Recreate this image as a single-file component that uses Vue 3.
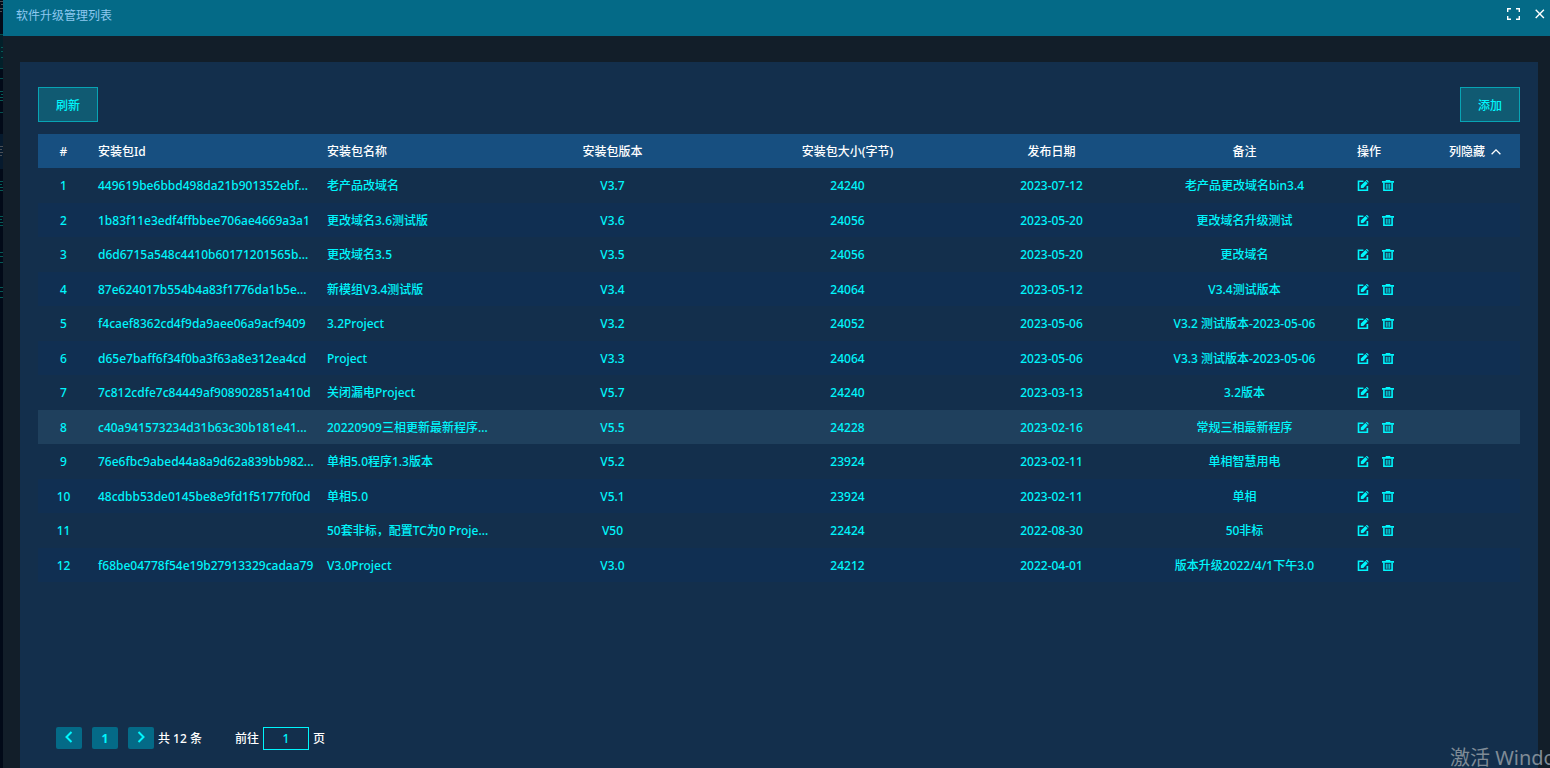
<script setup>
import { ref } from 'vue'

const page = ref('1')
const rows = [
  ['449619be6bbd498da21b901352ebf...', '老产品改域名', 'V3.7', '24240', '2023-07-12', '老产品更改域名bin3.4'],
  ['1b83f11e3edf4ffbbee706ae4669a3a1', '更改域名3.6测试版', 'V3.6', '24056', '2023-05-20', '更改域名升级测试'],
  ['d6d6715a548c4410b60171201565b...', '更改域名3.5', 'V3.5', '24056', '2023-05-20', '更改域名'],
  ['87e624017b554b4a83f1776da1b5e...', '新模组V3.4测试版', 'V3.4', '24064', '2023-05-12', 'V3.4测试版本'],
  ['f4caef8362cd4f9da9aee06a9acf9409', '3.2Project', 'V3.2', '24052', '2023-05-06', 'V3.2 测试版本-2023-05-06'],
  ['d65e7baff6f34f0ba3f63a8e312ea4cd', 'Project', 'V3.3', '24064', '2023-05-06', 'V3.3 测试版本-2023-05-06'],
  ['7c812cdfe7c84449af908902851a410d', '关闭漏电Project', 'V5.7', '24240', '2023-03-13', '3.2版本'],
  ['c40a941573234d31b63c30b181e41...', '20220909三相更新最新程序...', 'V5.5', '24228', '2023-02-16', '常规三相最新程序'],
  ['76e6fbc9abed44a8a9d62a839bb982...', '单相5.0程序1.3版本', 'V5.2', '23924', '2023-02-11', '单相智慧用电'],
  ['48cdbb53de0145be8e9fd1f5177f0f0d', '单相5.0', 'V5.1', '23924', '2023-02-11', '单相'],
  ['', '50套非标，配置TC为0 Proje...', 'V50', '22424', '2022-08-30', '50非标'],
  ['f68be04778f54e19b27913329cadaa79', 'V3.0Project', 'V3.0', '24212', '2022-04-01', '版本升级2022/4/1下午3.0'],
]
const activeRow = 7
</script>

<template>
  <div class="screen">
    <svg class="backdrop" width="3" height="320" viewBox="0 0 3 320" aria-hidden="true">
      <path class="shade" d="M0 34h3v35H0z" />
      <path class="band" d="M0 134h3v35H0z" />
      <path class="gray" d="M0 1.5h3M1 4.5h2M0 8.5h3M0 11.5h2M0 146.5h3M0 149.5h2M0 152.5h3M0 155.5h2" />
      <path class="rule" d="M0 34.5h3M0 68.5h3M0 78.5h3M0 112.5h3" />
      <path class="green" d="M1 47.5h2M1 51.5h2M1 57.5h2M0 91.5h3M1 94.5h2M0 97.5h3M0 100.5h3M0 181.5h3M0 184.5h2M0 187.5h3M0 190.5h3M0 216.5h3M0 219.5h2M0 222.5h3M0 225.5h3M0 252.5h3M0 256.5h3M0 262.5h3M0 287.5h3M0 291.5h3M0 297.5h3" />
    </svg>
    <section class="dialog">
      <header class="titlebar">
        <h1>软件升级管理列表</h1>
        <div class="window-tools">
          <button type="button" aria-label="全屏">
            <svg width="13" height="12" viewBox="0 0 13 12"><path d="M.7 4V.7h3.3M9 .7h3.3V4M12.3 8v3.3H9M4 11.3H.7V8" /></svg>
          </button>
          <button type="button" aria-label="关闭">
            <svg width="10" height="10" viewBox="0 0 10 10"><path d="M.7.7l8.2 8.2M8.9.7L.7 8.9" /></svg>
          </button>
        </div>
      </header>

      <main class="panel">
        <div class="toolbar">
          <button type="button" class="action">刷新</button>
          <button type="button" class="action">添加</button>
        </div>

        <table>
          <colgroup>
            <col class="c-no"><col class="c-id"><col class="c-name"><col class="c-version"><col class="c-size">
            <col class="c-date"><col class="c-remark"><col class="c-ops"><col class="c-hide">
          </colgroup>
          <thead>
            <tr>
              <th>#</th>
              <th class="left">安装包Id</th>
              <th class="left">安装包名称</th>
              <th>安装包版本</th>
              <th>安装包大小(字节)</th>
              <th>发布日期</th>
              <th>备注</th>
              <th class="ops">操作</th>
              <th>
                <button type="button" class="hide-toggle">
                  列隐藏
                  <svg width="10" height="6" viewBox="0 0 10 6"><path d="M.6 5.3L5 .9l4.4 4.4" /></svg>
                </button>
              </th>
            </tr>
          </thead>
          <tbody>
            <tr v-for="(row, i) in rows" :key="i" :class="{ active: i === activeRow }">
              <td>{{ i + 1 }}</td>
              <td class="left">{{ row[0] }}</td>
              <td class="left">{{ row[1] }}</td>
              <td>{{ row[2] }}</td>
              <td>{{ row[3] }}</td>
              <td>{{ row[4] }}</td>
              <td>{{ row[5] }}</td>
              <td class="ops">
                <div class="icons">
                  <button type="button" aria-label="编辑">
                    <svg width="12" height="12" viewBox="0 0 12 12">
                      <path class="line" d="M6.4 1.3H1.5v8.9h8.9V6" />
                      <path class="fill" d="M3.8 8V5.6L8.4 1l2.3 2.3L6.2 8zM9 .5l.4-.4c.2-.1.5-.1.7 0l1.4 1.4c.2.3.2.5 0 .7l-.4.5z" />
                    </svg>
                  </button>
                  <button type="button" aria-label="删除">
                    <svg width="12" height="12" viewBox="0 0 12 12">
                      <path class="fill" d="M3.7 0h4.6v1H12v1.8H0V1h3.7z" />
                      <path class="line" d="M1.9 2.5v7.8h8.2V2.5" />
                      <path class="thin" d="M4.3 3.8v5M6 3.8v5M7.7 3.8v5" />
                    </svg>
                  </button>
                </div>
              </td>
              <td></td>
            </tr>
          </tbody>
        </table>

        <nav class="pager" aria-label="分页">
          <button type="button" class="page" aria-label="上一页">
            <svg width="8" height="12" viewBox="0 0 8 12"><path d="M6.5 1L1.5 6l5 5" /></svg>
          </button>
          <button type="button" class="page number">1</button>
          <button type="button" class="page" aria-label="下一页">
            <svg width="8" height="12" viewBox="0 0 8 12"><path d="M1.5 1l5 5-5 5" /></svg>
          </button>
          <span class="total">共 12 条</span>
          <label class="jump">前往 <input v-model="page" type="text"> 页</label>
        </nav>
      </main>
    </section>
    <div class="watermark">激活 Windows</div>
  </div>
</template>

<style>
body {
  margin: 0;
  background: #020a18;
}
</style>

<style scoped>
.screen {
  position: relative;
  box-sizing: border-box;
  height: 100vh;
  padding-left: 3px;
  overflow: hidden;
  font: 500 12px/18px "Noto Sans", "Noto Sans CJK SC", sans-serif;
  color: #fff;
}
.backdrop {
  position: absolute;
  top: 0;
  left: 0;
}
.backdrop .shade {
  fill: #03202a;
  stroke: none;
}
.backdrop .band {
  fill: #061a2e;
  stroke: none;
}
.backdrop .gray {
  stroke: #4a4f55;
}
.backdrop .rule {
  stroke: #04504f;
}
.backdrop .green {
  stroke: #045a56;
}
button,
input {
  margin: 0;
  padding: 0;
  border: 0;
  background: none;
  font: inherit;
  color: inherit;
}
button {
  display: inline-flex;
  align-items: center;
  justify-content: center;
  cursor: pointer;
}
svg {
  display: block;
  fill: none;
  stroke: currentColor;
}
.dialog {
  display: flex;
  flex-direction: column;
  height: 100%;
  background: #121e29;
}
.titlebar {
  display: flex;
  flex: none;
  justify-content: space-between;
  box-sizing: border-box;
  height: 36px;
  padding: 6px 5px 0 13px;
  background: #046a87;
}
.titlebar h1 {
  margin: 0;
  font-size: 12px;
  font-weight: 400;
  line-height: 20px;
  color: #8cc8f0;
}
.window-tools {
  display: flex;
  gap: 15px;
  height: 16px;
}
.window-tools svg {
  stroke-width: 1.4;
}
.panel {
  display: flex;
  flex: 1;
  flex-direction: column;
  margin: 26px 12px 0 17px;
  padding: 25px 18px 0;
  background: #132f4c;
}
.toolbar {
  display: flex;
  justify-content: space-between;
  margin-bottom: 12px;
}
.action {
  box-sizing: border-box;
  width: 60px;
  height: 35px;
  padding-top: 2px;
  border: 1px solid #08a4b4;
  background: #105a72;
  color: #00f6fc;
}
table {
  width: 100%;
  table-layout: fixed;
  border-collapse: collapse;
  color: #00f6fc;
}
.c-no { width: 51px; }
.c-id { width: 229px; }
.c-name { width: 183px; }
.c-version { width: 223px; }
.c-size { width: 247px; }
.c-date { width: 161px; }
.c-remark { width: 225px; }
.c-ops { width: 73px; }
.c-hide { width: 90px; }
th,
td {
  box-sizing: border-box;
  height: 34px;
  padding: 2px 0 0;
  font-weight: 500;
  text-align: center;
  white-space: nowrap;
}
th {
  background: #174f80;
  color: #fff;
}
tbody tr:nth-child(odd) td {
  height: 35px;
  padding-top: 0;
}
tbody tr:nth-child(even) {
  background: #102f52;
}
tbody tr.active {
  background: #1f405d;
}
th.left,
td.left {
  padding-left: 9px;
  text-align: left;
}
th.ops,
td.ops {
  text-align: left;
}
.icons {
  display: flex;
  gap: 13px;
}
.line {
  stroke-width: 1.6;
}
.thin {
  stroke-width: 0.9;
}
.fill {
  fill: currentColor;
  stroke: none;
}
.hide-toggle {
  gap: 6px;
}
.hide-toggle svg {
  stroke-width: 1.3;
}
.pager {
  display: flex;
  align-items: flex-start;
  margin-top: auto;
  padding: 0 18px 18px;
  line-height: 23px;
}
.page {
  width: 26px;
  height: 22px;
  margin-right: 10px;
  border-radius: 2px;
  background: #046a87;
  font-weight: 700;
  color: #00f6fc;
}
.page svg {
  margin-bottom: 2px;
  stroke-width: 2;
}
.total {
  margin-left: -6px;
}
.jump {
  display: flex;
  gap: 4px;
  align-items: center;
  margin-left: 33px;
}
.jump input {
  box-sizing: border-box;
  width: 46px;
  height: 23px;
  border: 1px solid #00f6fc;
  text-align: center;
  color: #00f6fc;
}
.watermark {
  position: absolute;
  bottom: -4px;
  left: calc(100% - 100px);
  font-size: 20px;
  font-weight: 400;
  line-height: 28px;
  white-space: nowrap;
  color: #7f8b96;
  pointer-events: none;
}
</style>
